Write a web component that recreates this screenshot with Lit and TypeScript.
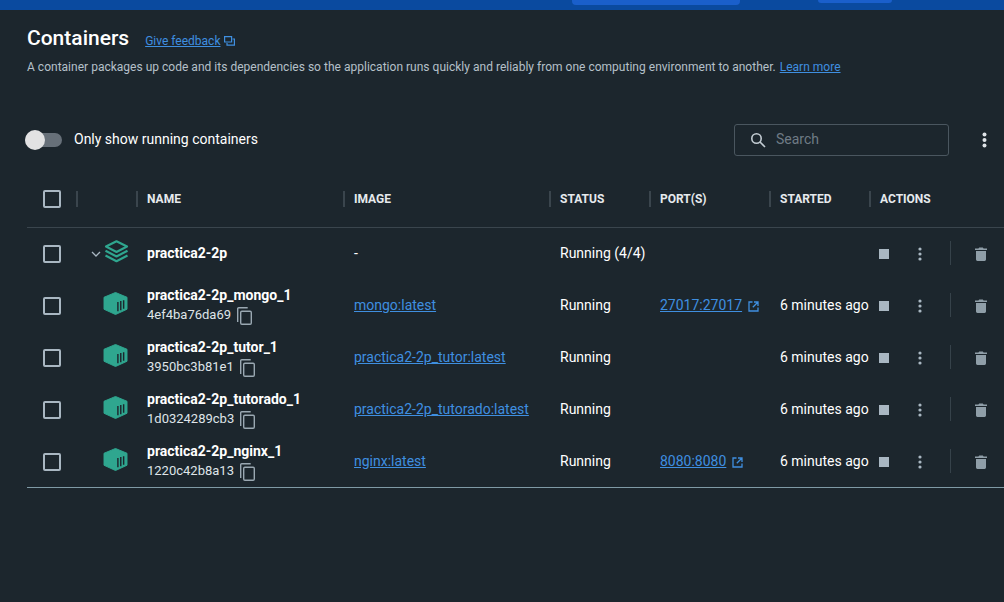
import { LitElement, html, css } from 'lit';
import { customElement } from 'lit/decorators.js';

const COLS = css`50px 60px 207px 206px 100px 120px 100px 1fr`;

const stackIcon = html`<svg class="lift" width="25" height="23" viewBox="0 0 25 23" fill="none" stroke="#2fa68f" stroke-width="2.2" stroke-linejoin="round">
  <path d="M12.5 1.3 23 6.6 12.5 11.9 2 6.6Z"/>
  <path d="M1.5 10.8 12.5 16.4 23.5 10.8"/>
  <path d="M1.5 15.6 12.5 21.2 23.5 15.6"/>
</svg>`;

const boxIcon = html`<svg class="lift" width="25" height="23" viewBox="0 0 26 24">
  <path d="M13 .5 25 5.5v12.5L13 23.5 1 18V5.5Z" fill="#2fa68f" stroke="#2fa68f" stroke-linejoin="round"/>
  <path d="M15.5 10.5v9.5M18.5 9.5v9.5M21.5 8.5v9" stroke="#1c262d" stroke-width="1.5"/>
</svg>`;

const copyIcon = html`<svg class="copy" width="15" height="18" viewBox="0 0 15 18" fill="none" stroke="#9aa8b2" stroke-width="1.4">
  <path d="M.7 15V1.7a1 1 0 0 1 1-1h9"/>
  <rect x="3.7" y="4.2" width="10.6" height="13" rx="1.2"/>
</svg>`;

const extIcon = html`<svg class="ext" width="11" height="11" viewBox="0 0 11 11" fill="none" stroke="#3f8fe0" stroke-width="1.3">
  <path d="M4.5 1H1v9h9V6.5M6 1h4v4M10 1 4.8 6.2"/>
</svg>`;

const kebab = html`<svg width="4" height="14" viewBox="0 0 4 14" fill="#a9b7c2">
  <circle cx="2" cy="2" r="1.6"/><circle cx="2" cy="7" r="1.6"/><circle cx="2" cy="12" r="1.6"/>
</svg>`;

const trash = html`<svg width="12" height="14" viewBox="0 0 12 14" fill="#8f9ea8">
  <path d="M0 1.6h3.4L4.2.6h3.6l.8 1H12v1.5H0ZM1 4h10v8.6a1.4 1.4 0 0 1-1.4 1.4H2.4A1.4 1.4 0 0 1 1 12.6Z"/>
</svg>`;

const containers = [
  { name: 'practica2-2p_mongo_1', id: '4ef4ba76da69', image: 'mongo:latest', port: '27017:27017' },
  { name: 'practica2-2p_tutor_1', id: '3950bc3b81e1', image: 'practica2-2p_tutor:latest', port: '' },
  { name: 'practica2-2p_tutorado_1', id: '1d0324289cb3', image: 'practica2-2p_tutorado:latest', port: '' },
  { name: 'practica2-2p_nginx_1', id: '1220c42b8a13', image: 'nginx:latest', port: '8080:8080' },
];

@customElement('app-root')
export class AppRoot extends LitElement {
  static styles = css`
    :host {
      display: block;
      height: 602px;
      overflow: hidden;
      background: #1c262d;
      font-family: Roboto, "Liberation Sans", sans-serif;
      font-size: 14px;
      color: #fff;
    }
    a { color: #3f8fe0; text-decoration: underline; }

    .topbar { height: 10px; background: #0a4a9f; display: flex; padding-left: 572px; gap: 78px; }
    .topbar i { display: block; background: #1a5fcb; border-radius: 0 0 4px 4px; width: 168px; height: 5px; }
    .topbar i + i { width: 74px; height: 3px; border-radius: 0 0 8px 8px; }

    .head { padding: 17px 0 0 27px; }
    .title { display: flex; align-items: center; gap: 16px; height: 22px; }
    h1 { margin: 0; font-size: 21px; font-weight: 500; }
    .feedback { display: flex; align-items: center; gap: 4px; font-size: 12px; margin-top: 5px; }
    .desc { margin: 10px 0 0; font-size: 12px; line-height: 16px; color: #b5c0c9; letter-spacing: .014px; }
    .desc a { margin-left: 1px; }

    .toolbar { display: flex; align-items: center; height: 32px; margin-top: 49px; padding: 0 17px 0 25px; }
    .switch { position: relative; width: 37px; height: 14px; background: #677079; border-radius: 7px; }
    .switch::before { content: ""; position: absolute; left: 0; top: -3px; width: 20px; height: 20px; border-radius: 50%; background: #e2e2e3; }
    .toolbar label { margin: 0 0 2px 12px; }
    .search { margin-left: auto; box-sizing: border-box; width: 215px; height: 32px; display: flex; align-items: center; gap: 10px; padding-left: 15px; border: 1px solid #4a565f; border-radius: 3px; color: #6f7b85; }
    .search span { margin-bottom: 2px; }
    .more { margin-left: 33px; display: flex; }
    .more svg { fill: #dfe4e8; }

    .row { display: grid; grid-template-columns: ${COLS}; margin-left: 27px; height: 52px; align-items: center; }
    .header { height: 57px; padding-bottom: 1px; margin-top: 15px; border-bottom: 1px solid #3a454d; font-size: 12px; font-weight: 700; color: #e6eaed; box-sizing: border-box; }
    .header > div { height: 16px; display: flex; align-items: center; padding-left: 9px; margin-left: -1px; border-left: 2px solid #3a454d; }
    .header > div.cb { padding: 0; margin: 0; border: 0; }
    .group { margin-top: -1px; }
    .cb { display: flex; align-items: center; margin-top: 2px; }
    .box { width: 14px; height: 14px; border: 2px solid #a9b7c2; border-radius: 2px; margin-left: 16px; }

    .pad { padding-left: 10px; }
    .info { padding-top: 1px; }
    .iconcell { display: flex; align-items: center; justify-content: flex-end; padding-right: 9px; gap: 2px; height: 100%; }
    .group .iconcell { padding-right: 8px; }
    .lift { margin-bottom: 4px; }
    .chev { margin-right: 1px; margin-top: 2px; }
    .name { font-weight: 700; line-height: 18px; }
    .info .name { margin-bottom: 1px; }
    .id { font-size: 13px; color: #dfe4e8; display: flex; align-items: center; gap: 6px; line-height: 20px; }
    .id svg { margin-top: 1px; }
    .link { display: flex; align-items: center; gap: 6px; }
    .ext { margin-top: 2px; }
    .time { white-space: nowrap; }
    .nowrap { white-space: nowrap; }

    .actions { display: grid; grid-template-columns: 28px 36px 31px 1fr; align-items: center; height: 100%; }
    .stop { width: 10px; height: 10px; background: #a9b7c2; margin: 2px 0 0 9px; }
    .kebab { display: flex; margin: 2px 0 0 20px; }
    .bar { height: 24px; border-left: 1px solid #36424a; margin-left: 16px; }
    .del { display: flex; margin: 2px 0 0 10px; }
    .last { height: 53px; border-bottom: 1px solid #7f9aa5; box-sizing: border-box; }
  `;

  actions() {
    return html`<div class="actions">
      <div class="stop"></div>
      <div class="kebab">${kebab}</div>
      <div class="bar"></div>
      <div class="del">${trash}</div>
    </div>`;
  }

  render() {
    return html`
      <div class="topbar"><i></i><i></i></div>
      <div class="head">
        <div class="title">
          <h1>Containers</h1>
          <a class="feedback" href="#"><span>Give feedback</span>
            <svg width="11" height="10" viewBox="0 0 11 10" fill="none" stroke="#3f8fe0" stroke-width="1.2"><path d="M.6.6h7v5.4H.6ZM8.6 3H10.4v6.2H3V7"/></svg>
          </a>
        </div>
        <p class="desc">A container packages up code and its dependencies so the application runs quickly and reliably from one computing environment to another. <a href="#">Learn more</a></p>
      </div>
      <div class="toolbar">
        <div class="switch"></div>
        <label>Only show running containers</label>
        <div class="search">
          <svg width="16" height="16" viewBox="0 0 16 16" fill="none" stroke="#c3ccd3" stroke-width="1.6"><circle cx="6.5" cy="6.5" r="4.7"/><path d="m10 10 5 5"/></svg>
          <span>Search</span>
        </div>
        <div class="more"><svg width="5" height="16" viewBox="0 0 5 16"><circle cx="2.5" cy="2.5" r="2"/><circle cx="2.5" cy="8" r="2"/><circle cx="2.5" cy="13.5" r="2"/></svg></div>
      </div>
      <div class="row header">
        <div class="cb"><div class="box"></div></div>
        <div></div><div>NAME</div><div>IMAGE</div><div>STATUS</div><div>PORT(S)</div><div>STARTED</div><div>ACTIONS</div>
      </div>
      <div class="row group">
        <div class="cb"><div class="box"></div></div>
        <div class="iconcell">
          <svg class="chev" width="10" height="6" viewBox="0 0 10 6" fill="none" stroke="#a9b7c2" stroke-width="1.3"><path d="m1 1 4 4 4-4"/></svg>
          ${stackIcon}
        </div>
        <div class="pad name">practica2-2p</div>
        <div class="pad">-</div>
        <div class="pad nowrap">Running (4/4)</div>
        <div></div><div></div>
        ${this.actions()}
      </div>
      ${containers.map((c, i) => html`
        <div class="row ${i === containers.length - 1 ? 'last' : ''}">
          <div class="cb"><div class="box"></div></div>
          <div class="iconcell">${boxIcon}</div>
          <div class="pad info">
            <div class="name">${c.name}</div>
            <div class="id">${c.id} ${copyIcon}</div>
          </div>
          <div class="pad"><a href="#">${c.image}</a></div>
          <div class="pad">Running</div>
          <div class="pad">${c.port ? html`<div class="link"><a href="#">${c.port}</a>${extIcon}</div>` : ''}</div>
          <div class="pad time">6 minutes ago</div>
          ${this.actions()}
        </div>`)}
    `;
  }
}
